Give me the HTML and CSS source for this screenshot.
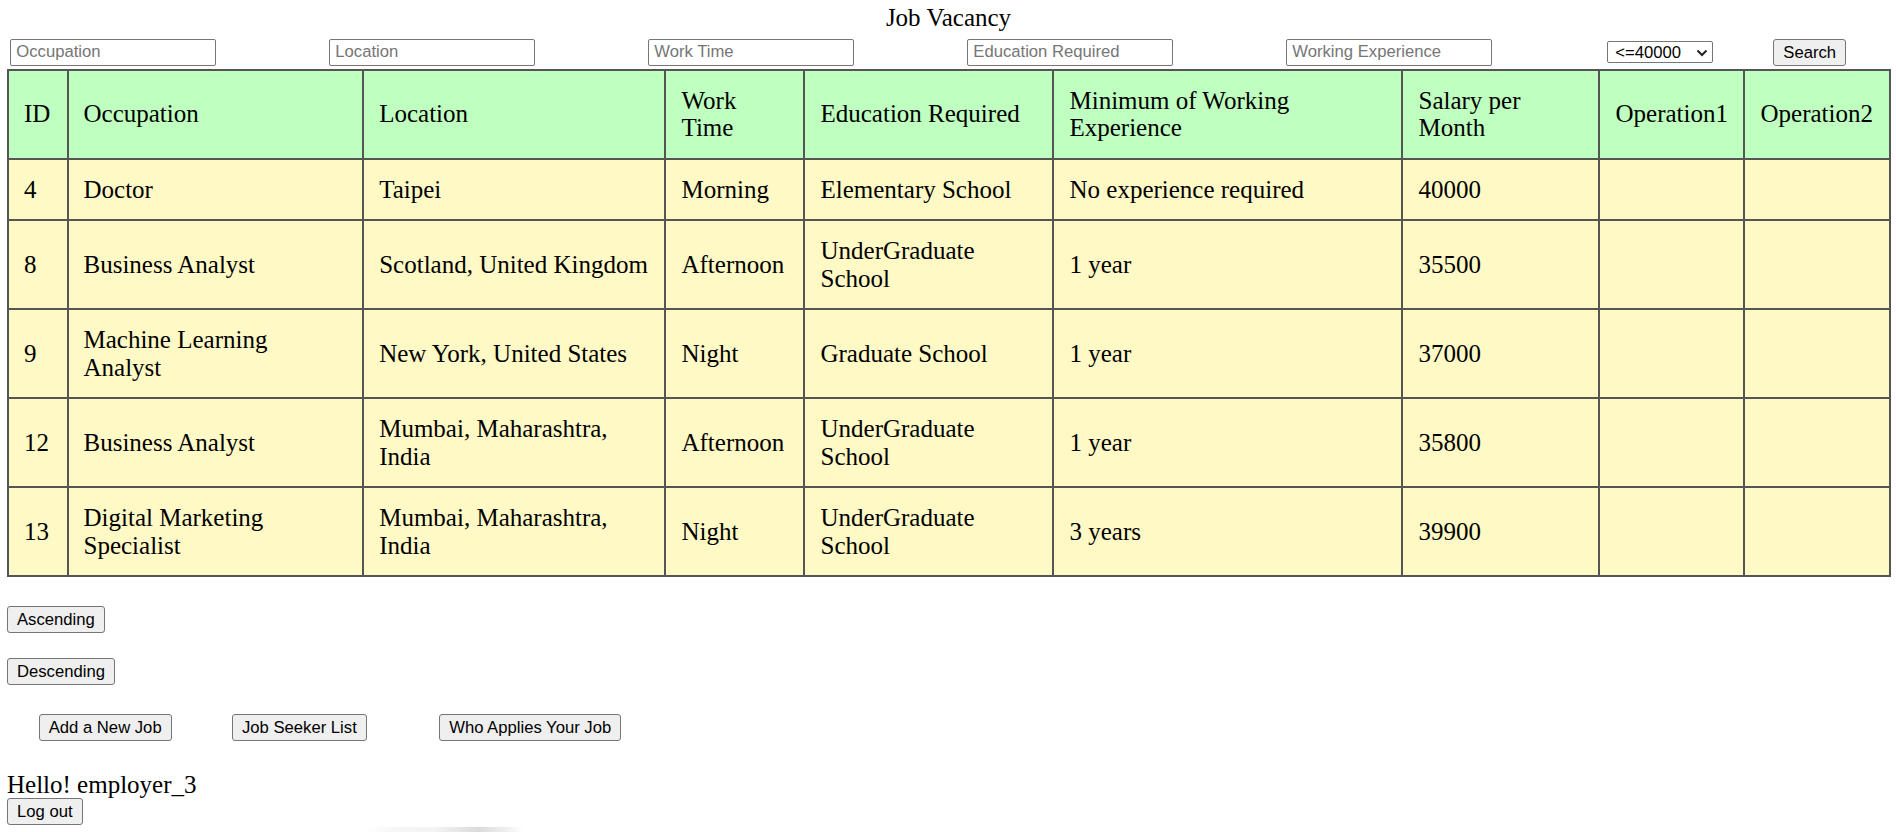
FILE: index.html
```html
<!DOCTYPE html>
<html lang="en">
<head>
<meta charset="utf-8">
<title>Job Vacancy</title>
<link rel="stylesheet" href="styles.css">
</head>
<body>
<div class="title">Job Vacancy</div>
<form class="search">
  <input class="field f-gap" type="text" placeholder="Occupation">
  <input class="field f-gap" type="text" placeholder="Location">
  <input class="field f-gap" type="text" placeholder="Work Time">
  <input class="field f-gap" type="text" placeholder="Education Required">
  <input class="field f-last" type="text" placeholder="Working Experience">
  <div class="select-box">
    <select class="salary"><option>&lt;=40000</option></select>
    <svg class="chev" width="12" height="8" viewBox="0 0 12 8"><polyline points="1.5,1.5 6,6 10.5,1.5" fill="none" stroke="#222" stroke-width="2"/></svg>
  </div>
  <button class="btn" type="button">Search</button>
</form>
<table class="jobs">
  <colgroup>
    <col class="c-id"><col class="c-occ"><col class="c-loc"><col class="c-time"><col class="c-edu"><col class="c-exp"><col class="c-sal"><col class="c-op1"><col class="c-op2">
  </colgroup>
  <thead>
    <tr><th>ID</th><th>Occupation</th><th>Location</th><th>Work Time</th><th>Education Required</th><th>Minimum of Working Experience</th><th>Salary per Month</th><th>Operation1</th><th>Operation2</th></tr>
  </thead>
  <tbody>
    <tr><td>4</td><td>Doctor</td><td>Taipei</td><td>Morning</td><td>Elementary School</td><td>No experience required</td><td>40000</td><td></td><td></td></tr>
    <tr><td>8</td><td>Business Analyst</td><td>Scotland, United Kingdom</td><td>Afternoon</td><td>UnderGraduate School</td><td>1 year</td><td>35500</td><td></td><td></td></tr>
    <tr><td>9</td><td>Machine Learning Analyst</td><td>New York, United States</td><td>Night</td><td>Graduate School</td><td>1 year</td><td>37000</td><td></td><td></td></tr>
    <tr><td>12</td><td>Business Analyst</td><td>Mumbai, Maharashtra, India</td><td>Afternoon</td><td>UnderGraduate School</td><td>1 year</td><td>35800</td><td></td><td></td></tr>
    <tr><td>13</td><td>Digital Marketing Specialist</td><td>Mumbai, Maharashtra, India</td><td>Night</td><td>UnderGraduate School</td><td>3 years</td><td>39900</td><td></td><td></td></tr>
  </tbody>
</table>
<div class="row sort-asc"><button class="btn" type="button">Ascending</button></div>
<div class="row sort-desc"><button class="btn" type="button">Descending</button></div>
<div class="row actions">
  <button class="btn a-add" type="button">Add a New Job</button>
  <button class="btn a-seek" type="button">Job Seeker List</button>
  <button class="btn a-who" type="button">Who Applies Your Job</button>
</div>
<div class="hello">Hello! employer_3</div>
<div class="row"><button class="btn" type="button">Log out</button></div>
<div class="photo-edge"></div>
</body>
</html>
```
FILE: styles.css
```css
html, body {
  background: #ffffff;
}
body {
  margin: 0;
  padding: 0 6px 0 7px;
  font-family: "Liberation Serif", "Times New Roman", serif;
  font-size: 25px;
  color: #000;
  overflow: hidden;
  height: 832px;
  box-sizing: border-box;
}
.title {
  margin-top: 4px;
  line-height: 28px;
  text-align: center;
}
.search {
  display: flex;
  align-items: center;
  margin: 6.5px 0 0 0;
  padding-left: 3.3px;
  height: 27px;
}
.field {
  box-sizing: border-box;
  width: 205.5px;
  height: 27px;
  border: 1px solid #767676;
  border-radius: 2px;
  padding: 0 4px 0 5px;
  font-family: "Liberation Sans", Arial, sans-serif;
  font-size: 16.67px;
  color: #000;
  background: #fff;
  outline: none;
}
.field::placeholder {
  color: #757575;
}
.f-gap { margin-right: 113.5px; }
.f-last { margin-right: 115.5px; }
.select-box {
  position: relative;
  width: 105.5px;
  height: 22.5px;
  margin-right: 60.5px;
}
.salary {
  display: block;
  appearance: none;
  -webkit-appearance: none;
  box-sizing: border-box;
  width: 105.5px;
  height: 22.5px;
  border: 1px solid #767676;
  border-radius: 2px;
  background: #fff;
  padding: 0 0 0 7px;
  margin: 0;
  font-family: "Liberation Sans", Arial, sans-serif;
  font-size: 16.67px;
  color: #000;
}
.chev {
  position: absolute;
  right: 5px;
  top: 8px;
  pointer-events: none;
}
.btn {
  box-sizing: border-box;
  height: 27px;
  margin: 0;
  padding: 0 9px;
  border: 1px solid #767676;
  border-radius: 3px;
  background: #efefef;
  font-family: "Liberation Sans", Arial, sans-serif;
  font-size: 16.67px;
  color: #000;
  line-height: 25px;
  white-space: nowrap;
}
.jobs {
  margin-top: 3px;
  border-collapse: collapse;
  table-layout: fixed;
  width: 1883px;
}
.c-id { width: 59.5px; }
.c-occ { width: 295.7px; }
.c-loc { width: 302.3px; }
.c-time { width: 139px; }
.c-edu { width: 249px; }
.c-exp { width: 349px; }
.c-sal { width: 197px; }
.c-op1 { width: 145px; }
.c-op2 { width: 145.5px; }
.jobs th,
.jobs td {
  border: 2px solid #555;
  padding: 16px 15px 16px 15px;
  font-weight: normal;
  text-align: left;
  vertical-align: middle;
  line-height: 27.5px;
}
.jobs th {
  background: #bfffbf;
}
.jobs td {
  background: #fff9c5;
}
.row {
  display: flex;
}
.sort-asc { margin-top: 29px; }
.sort-desc { margin-top: 25.4px; }
.actions { margin-top: 29px; }
.a-add { margin-left: 31.7px; }
.a-seek { margin-left: 60.3px; }
.a-who { margin-left: 72.4px; }
.hello {
  margin-top: 29.3px;
  line-height: 27.7px;
}
.photo-edge {
  margin: 2px 0 0 356px;
  width: 160px;
  height: 8px;
  background:
    linear-gradient(to right, rgba(255,255,255,0) 0%, rgba(150,150,150,0.08) 20%, rgba(140,140,140,0.1) 45%, rgba(90,90,90,0.22) 72%, rgba(130,130,130,0.14) 88%, rgba(255,255,255,0) 100%);
}
```
